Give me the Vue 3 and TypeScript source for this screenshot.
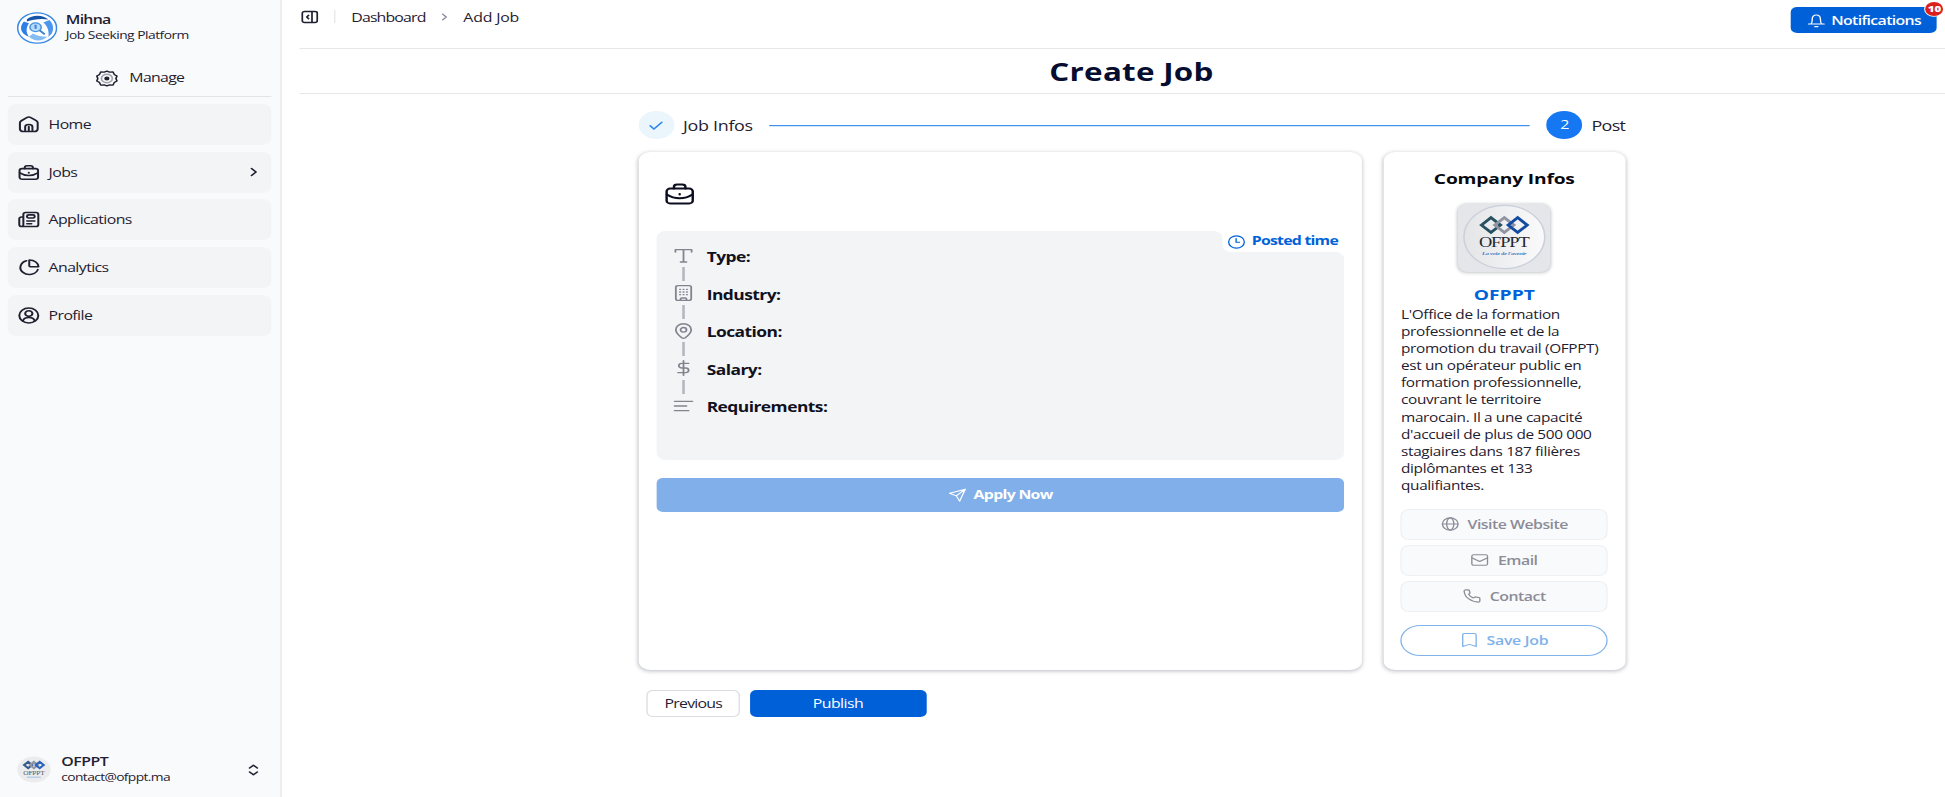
<script setup lang="ts">
interface NavItem { label: string; icon: string; more?: boolean }

const nav: NavItem[] = [
  { label: 'Home', icon: 'home' },
  { label: 'Jobs', icon: 'briefcase', more: true },
  { label: 'Applications', icon: 'news' },
  { label: 'Analytics', icon: 'pie' },
  { label: 'Profile', icon: 'user' },
]
const fields = [
  { label: 'Type:', icon: 'type' },
  { label: 'Industry:', icon: 'building' },
  { label: 'Location:', icon: 'pin' },
  { label: 'Salary:', icon: 'dollar' },
  { label: 'Requirements:', icon: 'lines' },
]
const links = [
  { label: 'Visite Website', icon: 'globe' },
  { label: 'Email', icon: 'mail' },
  { label: 'Contact', icon: 'phone' },
]
const about = [
  "L'Office de la formation", 'professionnelle et de la', 'promotion du travail (OFPPT)', 'est un opérateur public en',
  'formation professionnelle,', 'couvrant le territoire', 'marocain. Il a une capacité', "d'accueil de plus de 500 000",
  'stagiaires dans 187 filières', 'diplômantes et 133', 'qualifiantes.',
]
const icons: Record<string, string> = {
  home: '<path d="M2.200 9.700c0-1.300.5-2.200 1.600-3l5.900-4.400c1.400-1.100 3.200-1.100 4.600 0l5.900 4.400c1.100.8 1.600 1.700 1.600 3v8.300c0 2.700-1.400 4-4 4H6.200c-2.600 0-4-1.300-4-4z"/><path d="M8 21.500v-6.200c0-4.500 8-4.500 8 0v6.200M12 15v6.500"/>',
  briefcase: '<rect x="1.800" y="6.500" width="20.400" height="15" rx="2.800"/><path d="M7.500 6.500V5C7.500 3.300 8.300 2.500 10 2.500h4c1.700 0 2.500.8 2.500 2.500v1.500M2 12.500c6 5 14 5 20 0M12 12v.6"/>',
  news: '<path d="M6 4.500C6 2.800 6.800 2 8.500 2h11.500c1.700 0 2.500.8 2.500 2.500v15c0 1.700-.8 2.500-2.500 2.500H4.500c-2 0-3-1-3-2.500V11c0-1.500.8-2.500 2.500-2.500h2zM6 8.500V19c0 2-.8 3-2 3"/><rect x="10" y="5.500" width="8.500" height="4.500" rx="1.800"/><path d="M10 14h8.500M10 18h5"/>',
  pie: '<path d="M9.500 2.500A9.900 9.900 0 1 0 22 15"/><path d="M12.500 1.500v8.200c0 .8.400 1.300 1.200 1.300h9c0-5.300-4.500-9.500-10.200-9.500z"/>',
  user: '<circle cx="12" cy="12" r="10.500"/><circle cx="12" cy="9.200" r="4"/><path d="M5.500 20c.5-3.800 3-5.200 6.500-5.200s6 1.400 6.500 5.200"/>',
  gear: '<path d="M9 3 12 1.500 15 3l3.800-.2 1.300 3.400 3 2.300L22 12l1.100 3.500-3 2.300-1.300 3.400L15 21l-3 1.500L9 21l-3.800.2-1.300-3.400-3-2.300L2 12 .9 8.500l3-2.300 1.300-3.400z"/><circle cx="12" cy="12" r="6" stroke-opacity=".4"/><circle cx="12" cy="12" r="2" fill="currentColor"/>',
  panel: '<rect x="2" y="2.500" width="20" height="19" rx="3"/><path d="M15 3v18M10.500 9 8 12l2.500 3"/>',
  right: '<path d="m9 5 7 7-7 7"/>',
  sort: '<path d="m6 8 6-5.500L18 8M6 16l6 5.500 6-5.500"/>',
  bell: '<path d="M5 18c1.200-1.500 1.500-3 1.500-8 0-4 2-7.500 5.500-7.500s5.500 3.500 5.500 7.500c0 5 .3 6.500 1.500 8zM1.500 18h21M10 22.500h4"/>',
  check: '<path d="m3.500 12.500 5.500 6L20.500 6"/>',
  clock: '<circle cx="12" cy="12" r="10.500"/><path d="M11.500 6v6.500h4.500"/>',
  type: '<path d="M2.500 6V2.500h19V6M12 2.500v18.500M8.500 21h7"/>',
  building: '<rect x="3" y="1" width="18" height="22" rx="2.500"/><path d="M7.700 6.500h.6M11.700 6.500h.6M15.700 6.500h.6M7.700 10.500h.6M11.700 10.500h.6M15.700 10.500h.6M7.700 14.500h.6M11.700 14.500h.6M15.700 14.500h.6M8.500 22.500V21c0-1 .5-1.500 1.500-1.500h4c1 0 1.500.5 1.500 1.500v1.500"/>',
  pin: '<path d="M3 10.500C3 5 6.800 1.200 12 1.200s9 3.800 9 9.300c0 4.500-4 8.700-7 11.600-1.400 1.200-2.600 1.200-4 0-3-2.900-7-7.100-7-11.600z"/><circle cx="12" cy="10.200" r="3.500"/>',
  dollar: '<path d="M12 1v22M18 5H10a3.500 3.500 0 0 0 0 7h4.500a3.500 3.500 0 0 1 0 7H5.500"/>',
  lines: '<path d="M1.500 5h21M1.500 12h14M1.500 19h16.500"/>',
  send: '<path d="M22.500 2 1.500 9l9 4.500L15 22.500zM22.500 2l-12 11.500"/>',
  globe: '<circle cx="12" cy="12" r="10.500"/><ellipse cx="12" cy="12" rx="4.800" ry="10.500"/><path d="M1.500 12h21"/>',
  mail: '<rect x="1.500" y="3" width="21" height="18" rx="2.500"/><path d="m2 8.500 10 6 10-6"/>',
  phone: '<path d="M22.500 17.500v3a2 2 0 0 1-2.200 2A20 20 0 0 1 1.500 3.700a2 2 0 0 1 2-2.200h3a2 2 0 0 1 2 1.700l.9 3.500-2 2.500a16 16 0 0 0 6.300 6.300l2.500-2 4.200.9a2 2 0 0 1 2.100 2z"/>',
  bookmark: '<path d="M3 23V3.500C3 2 3.800 1 5.500 1h13C20.200 1 21 2 21 3.500V23l-9-3.500z"/>',
}
</script>

<template>
  <div class="app">
    <aside class="sidebar">
      <div class="brand">
        <svg class="brand-logo" viewBox="0 0 40 40">
          <circle cx="20" cy="20" r="19" fill="#fff" stroke="#3b8be6" stroke-width="1.500" />
          <path d="M10 9C15 3 26 3 31 9.500 25 8 16 9 10 12z" fill="#1555a8" />
          <path d="M7 12c-5 7-3 16 5 19-3-6-3-11 0-17z" fill="#2f7fe8" />
          <path d="M32 10c5 6 5 16-1 21 1-7-1-14-5-18z" fill="#4b97ee" />
          <path d="M12 31c5 6 13 6 18 0-6 0-10-1-14-4z" fill="#85bdf3" />
          <circle cx="18.500" cy="19" r="5.500" fill="#b9dbfa" stroke="#4a93de" stroke-width="1.500" />
          <path d="m22.500 23 5 5M18.500 16v5" stroke="#3b82d0" stroke-width="2" />
        </svg>
        <div class="two">
          <span class="strong name">Mihna</span>
          <span class="small tagline">Job Seeking Platform</span>
        </div>
      </div>
      <div class="manage">
        <svg class="ic" viewBox="0 0 24 24" v-html="icons.gear" />
        <span>Manage</span>
      </div>
      <nav>
        <a v-for="n in nav" :key="n.label" class="nav-item">
          <svg class="ic" viewBox="0 0 24 24" v-html="icons[n.icon]" />
          <span>{{ n.label }}</span>
          <svg v-if="n.more" class="ic more" viewBox="0 0 24 24" v-html="icons.right" />
        </a>
      </nav>
      <div class="account">
        <svg class="avatar" viewBox="0 0 60 60">
          <circle cx="30" cy="30" r="29" fill="#ececee" />
          <g fill="none" stroke-width="4"><path d="m13 20 7-7 7 7-7 7z" stroke="#34598f" /><path d="m23 20 7-7 7 7-7 7z" stroke="#9297a3" /><path d="m33 20 7-7 7 7-7 7z" stroke="#2a66b8" /></g>
          <text x="30" y="42" text-anchor="middle" class="logo-word">OFPPT</text>
          <path d="M18 47h24" stroke="#81b3df" stroke-width="2" />
        </svg>
        <div class="two">
          <span class="strong">OFPPT</span>
          <span class="small contact">contact@ofppt.ma</span>
        </div>
        <svg class="ic sort" viewBox="0 0 24 24" v-html="icons.sort" />
      </div>
    </aside>

    <main>
      <header>
        <svg class="ic panel" viewBox="0 0 24 24" v-html="icons.panel" />
        <i class="bar" />
        <span class="crumb">Dashboard</span>
        <svg class="ic crumb-sep" viewBox="0 0 24 24" v-html="icons.right" />
        <span class="crumb-current">Add Job</span>
        <button class="notif">
          <svg class="ic" viewBox="0 0 24 24" v-html="icons.bell" />
          <span>Notifications</span>
          <b class="badge">10</b>
        </button>
      </header>
      <h1>Create Job</h1>

      <section class="wizard">
        <div class="steps">
          <span class="dot done"><svg class="ic" viewBox="0 0 24 24" v-html="icons.check" /></span>
          <span class="step-label">Job Infos</span>
          <i class="rail" />
          <span class="dot">2</span>
          <span class="step-label post">Post</span>
        </div>

        <div class="cards">
          <article class="card job">
            <svg class="ic case" viewBox="0 0 24 24" v-html="icons.briefcase" />
            <div class="details">
              <div class="posted">
                <svg class="ic" viewBox="0 0 24 24" v-html="icons.clock" />
                <span>Posted time</span>
              </div>
              <div v-for="f in fields" :key="f.label" class="field">
                <div class="track"><svg class="ic" viewBox="0 0 24 24" v-html="icons[f.icon]" /><i /></div>
                <span>{{ f.label }}</span>
              </div>
            </div>
            <button class="apply">
              <svg class="ic" viewBox="0 0 24 24" v-html="icons.send" />
              <span>Apply Now</span>
            </button>
          </article>

          <article class="card company">
            <h2>Company Infos</h2>
            <div class="logo">
              <svg viewBox="0 0 72 69">
                <defs><linearGradient id="disc"><stop offset="0" stop-color="#e4e5e7" /><stop offset="1" stop-color="#fafafb" /></linearGradient></defs>
                <circle cx="36.500" cy="34" r="31.800" fill="url(#disc)" stroke="#c9cfdb" stroke-width="1.200" />
                <g fill="none" stroke-width="2.600"><path d="m18.500 22 7.500-7.500 7.500 7.500-7.500 7.500z" stroke="#24505f" /><path d="m29 22 7.500-7.500L44 22l-7.500 7.500z" stroke="#9094a0" /><path d="m39.500 22 7.500-7.500 7.500 7.500-7.500 7.500z" stroke="#124b9f" /></g>
                <text x="36.500" y="44.300" text-anchor="middle" textLength="40" class="logo-text">OFPPT</text>
                <text x="36.500" y="52" text-anchor="middle" textLength="35" class="logo-tag">La voie de l'avenir</text>
              </svg>
            </div>
            <h3>OFPPT</h3>
            <p><span v-for="l in about" :key="l">{{ l }}</span></p>
            <button v-for="l in links" :key="l.label" class="link">
              <svg class="ic" viewBox="0 0 24 24" v-html="icons[l.icon]" />
              <span>{{ l.label }}</span>
            </button>
            <button class="save">
              <svg class="ic" viewBox="0 0 24 24" v-html="icons.bookmark" />
              <span>Save Job</span>
            </button>
          </article>
        </div>
        <div class="actions">
          <button class="prev"><span>Previous</span></button>
          <button class="publish"><span>Publish</span></button>
        </div>
      </section>
    </main>
  </div>
</template>

<style>
html, body { margin: 0; overflow: hidden; background: #fff; }
</style>

<style scoped>
* { box-sizing: border-box; }
.app {
  display: flex; width: 1519.530px; height: 797px; overflow: hidden;
  transform: scaleX(1.28); transform-origin: 0 0;
  font: 12.400px/1 "Open Sans", "Noto Sans", sans-serif; letter-spacing: -.4px; color: #1f2030; background: #fff;
}
span, b { white-space: nowrap; }
button { font: inherit; letter-spacing: inherit; border: 0; padding: 0; display: flex; align-items: center; justify-content: center; }
button span, .nav-item span { padding-top: 1.600px; }
.ic { flex: none; width: 16px; height: 16px; fill: none; stroke: currentColor; stroke-width: 1.800; stroke-linecap: round; stroke-linejoin: round; overflow: visible; }

.sidebar { flex: none; width: 220.300px; padding: 11px 7.600px 11px 6.250px; background: #f9fafc; border-right: 1.500px solid #e5e7eb; display: flex; flex-direction: column; }
.brand, .account { display: flex; align-items: center; height: 33px; padding-left: 7.200px; }
.brand-logo { width: 32px; height: 32px; }
.two { display: flex; flex-direction: column; margin-left: 6px; line-height: 14.600px; }
.strong { font-weight: 600; }
.name { letter-spacing: -.6px; }
.small { font-size: 10.800px; }
.tagline { letter-spacing: -.4px; }
.contact { letter-spacing: -.5px; }
.manage { height: 53px; margin-bottom: 7px; padding: 25px 0 0 69px; display: flex; align-items: flex-start; gap: 8.800px; border-bottom: 1px solid #e2e4e9; line-height: 17px; letter-spacing: -.55px; }
.manage .ic { width: 17px; height: 17px; margin-top: .5px; }
nav { display: flex; flex-direction: column; gap: 6.700px; }
.nav-item { display: flex; align-items: center; height: 41px; padding: 0 7.700px; gap: 7px; background: #f3f4f6; border-radius: 7px; letter-spacing: -.46px; }
.nav-item .ic { stroke-width: 2.200; width: 17px; height: 17px; }
.nav-item .more { width: 12px; height: 12px; margin-left: auto; stroke-width: 2.800; }
.account { margin-top: auto; padding-right: 7.700px; }
.avatar { width: 27px; height: 27px; }
.logo-word { font: 13px "Liberation Serif", serif; fill: #555a66; }
.account .two { margin-left: 7.500px; }
.sort { width: 12px; height: 12px; margin-left: auto; stroke-width: 2.800; }

main { flex: 1; padding-left: 14.100px; min-width: 0; }
header { display: flex; align-items: flex-start; height: 49px; border-bottom: 1px solid #e5e7eb; padding: 7px 6.250px 0 0; line-height: 21px; }
.panel { width: 14px; height: 14px; margin: 3px 0 0 .5px; stroke-width: 2.300; }
.bar { width: 1px; height: 13px; margin: 3px 12px 0 12.500px; background: #e5e7eb; }
.crumb { letter-spacing: -.65px; }
.crumb-current { letter-spacing: -.15px; }
.crumb-sep { width: 10px; height: 10px; margin: 5px 10px 0 9.500px; stroke-width: 2.600; color: #83889a; }
.notif { position: relative; margin-left: auto; width: 114px; height: 26px; gap: 5px; border-radius: 5px; background: #0060d8; color: #fff; font-weight: 550; letter-spacing: -.5px; line-height: 20px; }
.notif .ic { width: 14px; height: 15px; }
.badge { position: absolute; right: -5px; top: -5.500px; width: 14px; height: 14px; border-radius: 7px; background: #dc1f1c; box-shadow: 0 0 0 .8px #fff; font-size: 9px; line-height: 14px; text-align: center; letter-spacing: 0; }
h1 { margin: 0; height: 45px; line-height: 45px; border-bottom: 1px solid #e5e7eb; font-size: 24.500px; font-weight: 700; letter-spacing: .2px; color: #050d30; text-align: center; padding-left: 14px; }
.wizard { width: 771px; margin: 17px 0 0 264.300px; }
.steps { display: flex; align-items: center; height: 28px; font-size: 14px; letter-spacing: -.25px; }
.dot { width: 28px; height: 28px; border-radius: 50%; background: #1677f2; color: #fff; display: grid; place-items: center; font-size: 12.500px; }
.dot.done { background: #ebf5fc; color: #2c84f0; }
.done .ic { width: 13px; height: 13px; stroke-width: 2.300; }
.step-label { margin-left: 7px; padding-top: 1px; }
.post { letter-spacing: -.55px; }
.rail { flex: 1; height: 1px; margin: 0 13px; background: #4091ec; box-shadow: 0 .5px 0 #a9cff6; }

.cards { display: flex; gap: 16.800px; margin-top: 13px; }
.card { height: 518px; border-radius: 9px; background: #fff; box-shadow: 0 1px 4px rgba(20, 28, 45, .3); }
.job { width: 565.600px; padding: 30px 14.400px 0; color: #10111c; }
.case { display: block; width: 24px; height: 24px; margin-left: 6px; color: #0c0e20; stroke-width: 1.900; }
.details { position: relative; height: 229px; margin-top: 25px; padding: 16px 0 0 13px; background: #f3f4f6; border-radius: 7px; }
.posted { position: absolute; top: 0; right: 0; height: 21px; width: 94.500px; padding-left: 4px; display: flex; align-items: center; gap: 4.500px; background: #fff; border-bottom-left-radius: 7px; color: #0062d9; font-weight: 700; letter-spacing: -.6px; }
.posted::before, .posted::after { content: ""; position: absolute; width: 7px; height: 7px; background: radial-gradient(circle at 0 100%, #f3f4f6 6.800px, #fff 7.200px); }
.posted::before { left: -7px; top: 0; }
.posted::after { right: 0; top: 21px; }
.posted .ic { width: 14px; height: 14px; }
.field { display: flex; height: 37.500px; font-size: 13.600px; font-weight: 700; letter-spacing: -.42px; line-height: 19px; gap: 10px; }
.track { display: flex; flex-direction: column; align-items: center; width: 16px; color: #81848f; }
.track .ic { width: 16px; height: 16px; margin: .5px 0 3.500px; stroke-width: 2.100; }
.track i { width: 1.200px; height: 14px; background: #b4b6be; }
.field:last-child i { display: none; }
.apply { width: 100%; height: 34.500px; margin-top: 17.500px; gap: 6px; border-radius: 5px; background: #80afe9; color: #fff; font-weight: 700; letter-spacing: -.55px; }
.apply .ic { width: 14px; height: 14px; }

.company { width: 188.600px; padding: 16px 13.300px 0 13px; }
h2 { margin: 0; font-size: 15px; line-height: 20px; letter-spacing: -.13px; color: #08090e; text-align: center; }
.logo { width: 71.500px; height: 69px; margin: 15px auto 0; border-radius: 8px; background: #e5e6e9; box-shadow: 0 1px 3px rgba(20, 28, 45, .25); }
.logo svg { display: block; width: 71.500px; height: 69px; }
.logo-text { font: 14.500px "Liberation Serif", serif; letter-spacing: 0; fill: #25262e; }
.logo-tag { font: italic 700 5px "Liberation Serif", serif; letter-spacing: 0; fill: #3980c8; }
h3 { margin: 12px 0 0; font-size: 15px; line-height: 20px; letter-spacing: 0; color: #0062d9; text-align: center; }
p { margin: 2px 0 14.500px .5px; font-size: 12px; line-height: 17.100px; letter-spacing: -.28px; color: #1f2030; }
p span { display: block; }
.link { width: 100%; height: 31px; margin-bottom: 5px; gap: 7px; border: 1px solid #eff0f3; border-radius: 7px; background: #f9fafb; color: #8a8c97; font-weight: 550; letter-spacing: -.4px; }
.link .ic, .save .ic { width: 14px; height: 14px; }
.save { width: 100%; height: 31px; margin-top: 13px; gap: 6.500px; border: 1px solid #80b2ea; border-radius: 16px; background: #fff; color: #80b2ea; font-weight: 550; letter-spacing: -.22px; }
.actions { display: flex; gap: 7.500px; margin: 20px 0 0 6.500px; }
.prev { width: 73px; height: 27px; border: 1px solid #d9dce1; border-radius: 5px; background: #fff; color: #1f2030; letter-spacing: -.6px; }
.publish { width: 138px; height: 27px; border-radius: 5px; background: #0060d8; color: #fff; }
</style>
